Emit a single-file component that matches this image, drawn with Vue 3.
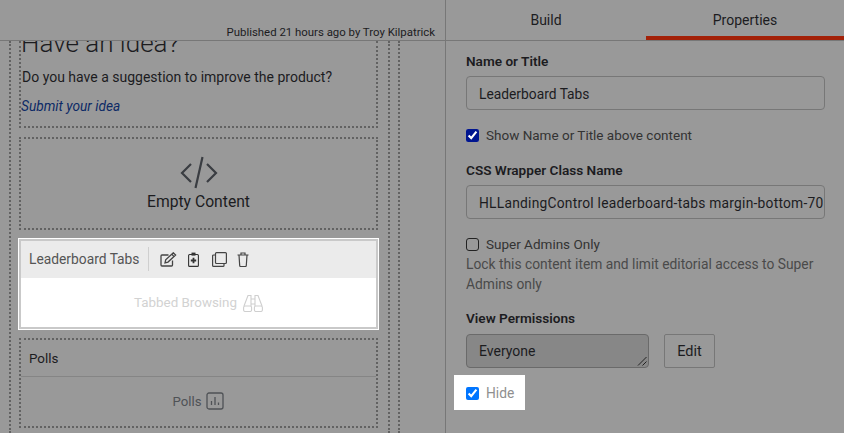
<script setup>
const perm = 'Everyone'
</script>

<template>
  <div class="page">
    <section class="left">
      <header class="pub">Published 21 hours ago by Troy Kilpatrick</header>
      <div class="canvas">
        <div class="col">
          <div class="card idea">
            <h2>Have an idea?</h2>
            <p>Do you have a suggestion to improve the product?</p>
            <a>Submit your idea</a>
          </div>
          <div class="card empty">
            <svg width="38" height="34" viewBox="0 0 38 34" fill="none" stroke="#3a3d42" stroke-width="2.2">
              <path d="M11 8 2 17l9 9M27 8l9 9-9 9" />
              <path d="M22.500 1 15.500 32" />
            </svg>
            <span>Empty Content</span>
          </div>
          <div class="selected">
            <div class="selbar">
              <span class="selname">Leaderboard Tabs</span>
              <i class="sep"></i>
              <svg class="tool" width="17" height="15" viewBox="0 0 17 15" fill="none" stroke="#444" stroke-width="1.300">
                <path d="M12.500 8.500V13a1 1 0 0 1-1 1H2a1 1 0 0 1-1-1V4a1 1 0 0 1 1-1h6.500" />
                <path d="M5 10.800l.7-3L13.300 .8l2.300 2.300L8 10.100z" />
                <path d="M11.800 2.300l2.300 2.300" />
              </svg>
              <svg class="tool t2" width="11" height="15" viewBox="0 0 11 15" fill="none" stroke="#333" stroke-width="1.100">
                <rect x=".6" y="2.500" width="9.800" height="11.900" rx="1" />
                <rect x="3.500" y=".6" width="4" height="3" fill="#333" stroke="none" />
                <path d="M5.500 5.800v5.500M2.800 8.500h5.400" stroke-width="1.800" />
              </svg>
              <svg class="tool t3" width="15" height="15" viewBox="0 0 15 15" fill="none" stroke="#444" stroke-width="1.200">
                <rect x="3.500" y=".6" width="10.900" height="10.900" rx="1" />
                <path d="M3.500 3H1.600a1 1 0 0 0-1 1v9.400a1 1 0 0 0 1 1H11a1 1 0 0 0 1-1v-1.900" />
              </svg>
              <svg class="tool t4" width="12" height="15" viewBox="0 0 12 15" fill="none" stroke="#444" stroke-width="1.200">
                <path d="M.5 3h11M4 3V1h4v2" />
                <path d="M2 3l.7 10.500a1 1 0 0 0 1 1h4.600a1 1 0 0 0 1-1L10 3" />
              </svg>
            </div>
            <div class="selbody">
              <span>Tabbed Browsing</span>
              <svg width="20" height="18" viewBox="0 0 20 18" fill="none" stroke="#cfcfcf" stroke-width="1.100">
                <path d="M1 12 5 1.500h3V12M19 12 15 1.500h-3V12M8 5h4M8 10h4" />
                <rect x=".6" y="12" width="8" height="5.500" rx="1.500" />
                <rect x="11.400" y="12" width="8" height="5.500" rx="1.500" />
              </svg>
            </div>
          </div>
          <div class="card polls">
            <div class="pollhead">Polls</div>
            <div class="pollbody">
              <span>Polls</span>
              <svg width="18" height="18" viewBox="0 0 18 18" fill="none" stroke="#4f5256" stroke-width="1.300">
                <rect x="1" y="1" width="16" height="16" rx="2" />
                <path d="M5.500 13V9M9 13V5M12.500 13v-2.500" />
              </svg>
            </div>
          </div>
        </div>
        <div class="col2"></div>
      </div>
    </section>

    <aside class="right">
      <nav class="tabs">
        <div class="tab build">Build</div>
        <div class="tab active">Properties</div>
      </nav>
      <form class="form">
        <label class="lbl">Name or Title</label>
        <div class="field">Leaderboard Tabs</div>
        <label class="check c1"><input type="checkbox" checked /> Show Name or Title above content</label>
        <label class="lbl l2">CSS Wrapper Class Name</label>
        <div class="field wide">HLLandingControl leaderboard-tabs margin-bottom-70</div>
        <label class="check c2"><input type="checkbox" /> Super Admins Only</label>
        <p class="hint">Lock this content item and limit editorial access to Super Admins only</p>
        <label class="lbl l3">View Permissions</label>
        <div class="permrow">
          <div class="area">
            {{ perm }}
            <svg class="grip" width="10" height="10" viewBox="0 0 10 10" stroke="#222" fill="none">
              <path d="M1 9.500 9.500 1M5.500 9.500 9.500 5.500" />
            </svg>
          </div>
          <div class="edit">Edit</div>
        </div>
        <label class="hide"><input type="checkbox" checked /> Hide</label>
      </form>
    </aside>
  </div>
</template>

<style>
html, body { margin: 0; background: #999; }
</style>

<style scoped>
.page {
  display: flex;
  width: 844px;
  height: 433px;
  overflow: hidden;
  background: #999;
  color: #1c1c1f;
  font-family: Roboto, "Liberation Sans", sans-serif;
  font-size: 14px;
}
.left {
  box-sizing: border-box;
  width: 446px;
  flex: none;
  border-right: 1px solid #777;
  display: flex;
  flex-direction: column;
}
.pub {
  box-sizing: border-box;
  height: 41px;
  flex: none;
  padding: 26px 10px 0 0;
  border-bottom: 1px solid #777;
  text-align: right;
  font-size: 11.400px;
  line-height: 13px;
}
.canvas {
  display: flex;
  flex: 1;
  min-height: 0;
  overflow: hidden;
  padding-left: 9px;
}
.col {
  box-sizing: border-box;
  width: 381px;
  flex: none;
  padding: 0 8px;
  border-left: 2px dotted #626262;
  border-right: 2px dotted #626262;
}
.col2 {
  margin-left: 8px;
  width: 0;
  border-left: 2px dotted #626262;
}
.card {
  box-sizing: border-box;
  border: 2px dotted #626262;
  width: 359px;
}
.idea {
  height: 87px;
  border-top: 0;
  overflow: hidden;
  padding-left: 0;
}
.idea h2 {
  margin: -14px 0 0;
  font-size: 26px;
  font-weight: 300;
  line-height: 32px;
}
.idea p {
  margin: 8px 0 0 1px;
  font-size: 14px;
  line-height: 20px;
}
.idea a {
  display: block;
  margin: 9px 0 0;
  font-style: italic;
  font-size: 13.700px;
  line-height: 20px;
  color: #0d2a66;
}
.empty {
  height: 93px;
  margin-top: 9px;
  padding-top: 17px;
  display: flex;
  flex-direction: column;
  align-items: center;
  gap: 2px;
  font-size: 15.700px;
  line-height: 20px;
}
.selected {
  box-sizing: border-box;
  width: 361px;
  height: 92px;
  margin: 8px 0 8px -1px;
  border: 1px solid #fff;
  background: #fff;
  box-shadow: inset 0 0 0 2px #c9c9c9;
  padding: 2px;
  display: flex;
  flex-direction: column;
}
.selbar {
  height: 37px;
  flex: none;
  background: #ebebeb;
  display: flex;
  align-items: center;
  padding: 0 0 1px 8px;
  box-sizing: border-box;
  color: #555;
  font-size: 13.800px;
}
.sep {
  width: 1px;
  height: 24px;
  margin: 0 11px 0 9px;
  background: #cfcfcf;
}
.tool { flex: none; }
.t2 { margin-left: 11px; }
.t3 { margin-left: 13px; }
.t4 { margin-left: 10px; }
.selbody {
  flex: 1;
  background: #fff;
  display: flex;
  align-items: center;
  justify-content: center;
  gap: 6px;
  color: #d2d2d2;
  font-size: 13.400px;
}
.polls { height: 90px; display: flex; flex-direction: column; }
.pollhead {
  box-sizing: border-box;
  height: 37px;
  flex: none;
  padding-left: 8px;
  border-bottom: 1px solid #858585;
  line-height: 38px;
  font-size: 13.400px;
}
.pollbody {
  flex: 1;
  display: flex;
  align-items: center;
  justify-content: center;
  gap: 5px;
  padding-bottom: 1px;
  color: #4f5256;
  font-size: 13.200px;
}
.right {
  flex: 1;
  min-width: 0;
}
.tabs {
  display: flex;
  height: 41px;
  box-sizing: border-box;
  border-bottom: 1px solid #777;
}
.tab {
  flex: 1;
  text-align: center;
  line-height: 40px;
  font-size: 14px;
  box-sizing: border-box;
}
.build { flex: 0 0 200px; }
.active {
  border-bottom: 4px solid #a32108;
  height: 40px;
}
.form {
  padding: 11px 19px 0 20px;
}
.lbl {
  display: block;
  font-weight: 600;
  font-size: 13.600px;
  line-height: 18px;
}
.field {
  box-sizing: border-box;
  height: 34px;
  margin-top: 6px;
  border: 1px solid #777;
  border-radius: 4px;
  padding-left: 12px;
  line-height: 34px;
  font-size: 13.800px;
  white-space: nowrap;
  overflow: hidden;
}
.wide {
  letter-spacing: .24px;
}
.check {
  display: flex;
  align-items: center;
  gap: 7px;
  line-height: 20px;
  color: #333;
  font-size: 13.500px;
}
.check input, .hide input {
  margin: 0;
  width: 13px;
  height: 13px;
}
.c1 { margin-top: 15px; }
.c1 input { accent-color: #00158f; }
.c2 { margin-top: 15px; }
.c2 input { appearance: none; border: 1px solid #222; border-radius: 3px; background: transparent; box-sizing: border-box; }
.l2 { margin-top: 16px; }
.hint {
  margin: 0;
  color: #4a4a4a;
  line-height: 20px;
  font-size: 13.800px;
}
.l3 { margin-top: 15px; }
.permrow {
  display: flex;
  gap: 15px;
  margin-top: 7px;
}
.area {
  box-sizing: border-box;
  position: relative;
  width: 183px;
  height: 34px;
  border: 1px solid #6a6a6a;
  border-radius: 4px;
  background: #878787;
  padding-left: 12px;
  line-height: 33px;
}
.grip { position: absolute; right: 1px; bottom: 1px; }
.edit {
  box-sizing: border-box;
  width: 51px;
  height: 34px;
  border: 1px solid #777;
  border-radius: 2px;
  text-align: center;
  line-height: 33px;
  font-size: 14.500px;
}
.hide {
  box-sizing: border-box;
  display: flex;
  align-items: center;
  gap: 7px;
  width: 71px;
  height: 35px;
  margin: 7px 0 0 -12px;
  padding: 1px 0 0 12px;
  background: #fff;
  color: #8f8f8f;
  font-size: 13.800px;
}
</style>
